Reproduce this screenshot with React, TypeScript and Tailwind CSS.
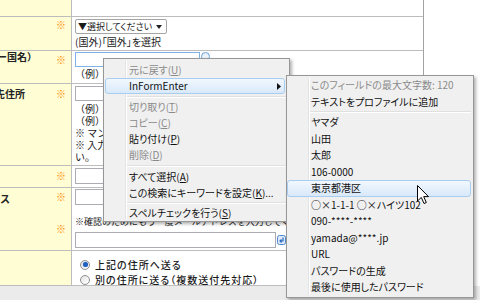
import React from "react";
import clsx from "clsx";

function Kome({ className }: { className?: string }) {
  return <span className={clsx("block text-[10px] leading-[10px] text-[#ff8a00]", className)}>※</span>;
}

function Box({ className }: { className?: string }) {
  return <div className={clsx("border border-[#abadb3] bg-white", className)} />;
}

function Row({ className, left, children }: { className: string; left: React.ReactNode; children?: React.ReactNode }) {
  return (
    <div className={clsx("flex border-b border-[#bdbdbd]", className)}>
      <div className="flex w-[72px] shrink-0 items-start border-r border-[#bdbdbd] bg-[#fffdd3]">{left}</div>
      <div className="flex min-w-0 flex-1 flex-col pl-[3px]">{children}</div>
    </div>
  );
}

// labels are scrolled off to the left in the screenshot, so they are clipped
function Label({ text, className }: { text: string; className: string }) {
  return (
    <div className="min-w-0 flex-1 overflow-hidden">
      <span className={clsx("block whitespace-nowrap text-[10px] font-bold leading-[12px] text-[#222] [font-feature-settings:normal]", className)}>{text}</span>
    </div>
  );
}

type Item = { t: React.ReactNode; off?: boolean; on?: boolean; arrow?: boolean; sep?: string };

const mainItems: Item[] = [
  { t: <>元に戻す(<u>U</u>)</>, off: true },
  { t: "InFormEnter", on: true, arrow: true },
  { t: "", sep: "h-[5px]" },
  { t: <>切り取り(<u>T</u>)</>, off: true },
  { t: <>コピー(<u>C</u>)</>, off: true },
  { t: <>貼り付け(<u>P</u>)</> },
  { t: <>削除(<u>D</u>)</>, off: true },
  { t: "", sep: "h-[6px]" },
  { t: <>すべて選択(<u>A</u>)</> },
  { t: <>この検索にキーワードを設定(<u>K</u>)...</> },
  { t: "", sep: "h-[4px]" },
  { t: <>スペルチェックを行う(<u>S</u>)</> },
];

const subItems: Item[] = [
  { t: "このフィールドの最大文字数: 120", off: true },
  { t: "テキストをプロファイルに追加" },
  { t: "", sep: "h-[4px]" },
  { t: "ヤマダ" },
  { t: "山田" },
  { t: "太郎" },
  { t: "106-0000" },
  { t: "東京都港区", on: true },
  { t: "○×1-1-1 ○×ハイツ102" },
  { t: "090-****-****" },
  { t: "yamada@****.jp" },
  { t: "URL" },
  { t: "パスワードの生成" },
  { t: "最後に使用したパスワード" },
];

function Menu({ items, className, rowClass, padClass }: { items: Item[]; className: string; rowClass: string; padClass: string }) {
  return (
    <div className={clsx("absolute border border-[#979797] bg-[#f0f0f0] text-[10px] shadow-[2px_2px_3px_rgba(0,0,0,0.3)]", className)}>
      <div className="absolute bottom-[2px] left-[21px] top-[2px] w-[2px] border-l border-r border-l-[#e2e3e3] border-r-white" />
      {items.map((it, i) =>
        it.sep ? (
          <div key={i} className={clsx("relative flex items-center pl-[23px] pr-[2px]", it.sep)}>
            <div className="h-[2px] w-full border-b border-t border-b-white border-t-[#e0e0e0]" />
          </div>
        ) : (
          <div key={i} className={clsx("relative", rowClass, padClass)}>
            <div
              className={clsx(
                "flex h-full items-center whitespace-nowrap rounded-[3px] border pl-[23px]",
                it.on ? "border-[#a9cdef] bg-gradient-to-b from-[#f1f7fe] to-[#d9e9fa]" : "border-transparent",
                it.off ? "text-[#8b8b8b]" : "text-[#111]"
              )}
            >
              <span className="leading-none">{it.t}</span>
              {it.arrow && (
                <svg className="ml-auto mr-[3px]" width="4" height="7" viewBox="0 0 4 7">
                  <path d="M0 0L4 3.5L0 7Z" fill="#111" />
                </svg>
              )}
            </div>
          </div>
        )
      )}
    </div>
  );
}

function Radio({ on }: { on?: boolean }) {
  return (
    <span className="flex h-[10px] w-[10px] shrink-0 items-center justify-center rounded-full border border-[#8e8f8f] bg-gradient-to-br from-[#e4e4e4] to-white">
      {on && <span className="h-[5px] w-[5px] rounded-full bg-[#1f5fbf] shadow-[0_0_1px_#6aa0e8]" />}
    </span>
  );
}

export default function App() {
  return (
    <div className="relative h-[300px] w-[480px] overflow-hidden bg-white text-[#1a1a1a] [font-family:'Noto_Sans_CJK_JP',sans-serif] [font-feature-settings:'palt']">
      <div className="w-[424px] border-r border-[#a3a3a3]">
        <Row className="h-[17px]" left={null} />

        <Row className="h-[34px]" left={<><div className="flex-1" /><div className="pr-[5px] pt-[3px]"><Kome /></div></>}>
          <div className="mt-[2px] flex h-[15px] w-[92px] items-center whitespace-nowrap rounded-[2px] border border-[#a5a5a5] bg-white pl-[2px] text-[9px] leading-none">
            <span>▼選択してください</span>
            <svg className="ml-auto mr-[4px] shrink-0" width="6" height="4" viewBox="0 0 6 4">
              <path d="M0 0H6L3 4Z" fill="#222" />
            </svg>
          </div>
          <div className="mt-[2px] text-[10px] leading-[12px]">(国外)「国外」を選択</div>
        </Row>

        <Row className="h-[33px]" left={<><Label text="地域ー国名）" className="ml-[-23px]" /><div className="pr-[5px] pt-[4px]"><Kome /></div></>}>
          <div className="mt-[1px] flex items-start">
            <div className="h-[15px] w-[125px] border border-[#7eb1e8] bg-white" />
            <div className="ml-[1px] h-[9px] w-[9px] rounded-full border border-[#6a9fd8] bg-[#eaf3fc]" />
          </div>
          <div className="mt-[1px] whitespace-nowrap text-[10px] leading-[12px] [font-feature-settings:normal]">（例）国外の場合は国名</div>
        </Row>

        <Row className="h-[82px]" left={<><Label text="先住所" className="ml-[-5px] pt-[4px]" /><div className="pr-[5px] pt-[5px]"><Kome /></div></>}>
          <Box className="mt-[2px] h-[15px] w-[190px]" />
          <div className="mt-[2px] whitespace-nowrap text-[10px] leading-[12px] [font-feature-settings:normal]">
            <div>（例）目黒区目黒1-2-3</div>
            <div>（例）目黒マンション101</div>
            <div>※ マンション名・部屋番号まで</div>
            <div>※ 入力漏れのないようご注意くださ</div>
            <div>い。</div>
          </div>
        </Row>

        <Row className="h-[22px]" left={<><div className="flex-1" /><div className="pr-[5px] pt-[5px]"><Kome /></div></>}>
          <Box className="mt-[2px] h-[16px] w-[120px]" />
        </Row>

        <Row className="h-[63px]" left={<><Label text="ドレス" className="ml-[-20px] pt-[5px]" /><div className="pr-[5px] pt-[4px]"><Kome /><Kome className="mt-[22px]" /></div></>}>
          <Box className="mt-[1px] h-[16px] w-[201px]" />
          <div className="mt-[11px] whitespace-nowrap text-[9px] leading-[12px] [font-feature-settings:normal]">
            ※確認のためにもう一度メールアドレスを入力してください
          </div>
          <div className="mt-[4px] flex items-center">
            <Box className="h-[16px] w-[201px]" />
            <svg className="ml-[1px]" width="9" height="10" viewBox="0 0 9 10">
              <rect x="0.5" y="0.5" width="8" height="9" rx="2" fill="#dbe9fa" stroke="#4f86cf" />
              <path d="M6 2.5V6H3M4.5 4.5L3 6L4.5 7.5" fill="none" stroke="#2e6bc0" strokeWidth="1.2" />
            </svg>
          </div>
        </Row>

        <Row className="h-[35px]" left={null}>
          <div className="flex flex-col pl-[5px] pt-[6px] text-[10px] font-medium leading-[15px] tracking-[1px]">
            <div className="flex items-center gap-[5px]"><Radio on /><span>上記の住所へ送る</span></div>
            <div className="flex items-center gap-[5px]"><Radio /><span>別の住所に送る（複数送付先対応）</span></div>
          </div>
        </Row>
      </div>
      <div className="h-[14px] bg-[#ebebeb]" />

      <Menu items={mainItems} className="left-[103px] top-[58px] w-[187px] pt-[3px]" rowClass="h-[16px]" padClass="pl-[1px] pr-[4px]" />
      <Menu items={subItems} className="left-[286px] top-[75px] w-[188px] pb-[1px] pt-[1px]" rowClass="h-[16.5px]" padClass="pl-0 pr-[2px]" />

      <svg className="absolute left-[417px] top-[185px]" width="13" height="20" viewBox="0 0 13 20">
        <path d="M0.5 0.5V16L4.3 12.4L7 18.5L9.3 17.5L6.7 11.6H11.5Z" fill="white" stroke="black" strokeWidth="1" strokeLinejoin="round" />
      </svg>
    </div>
  );
}
